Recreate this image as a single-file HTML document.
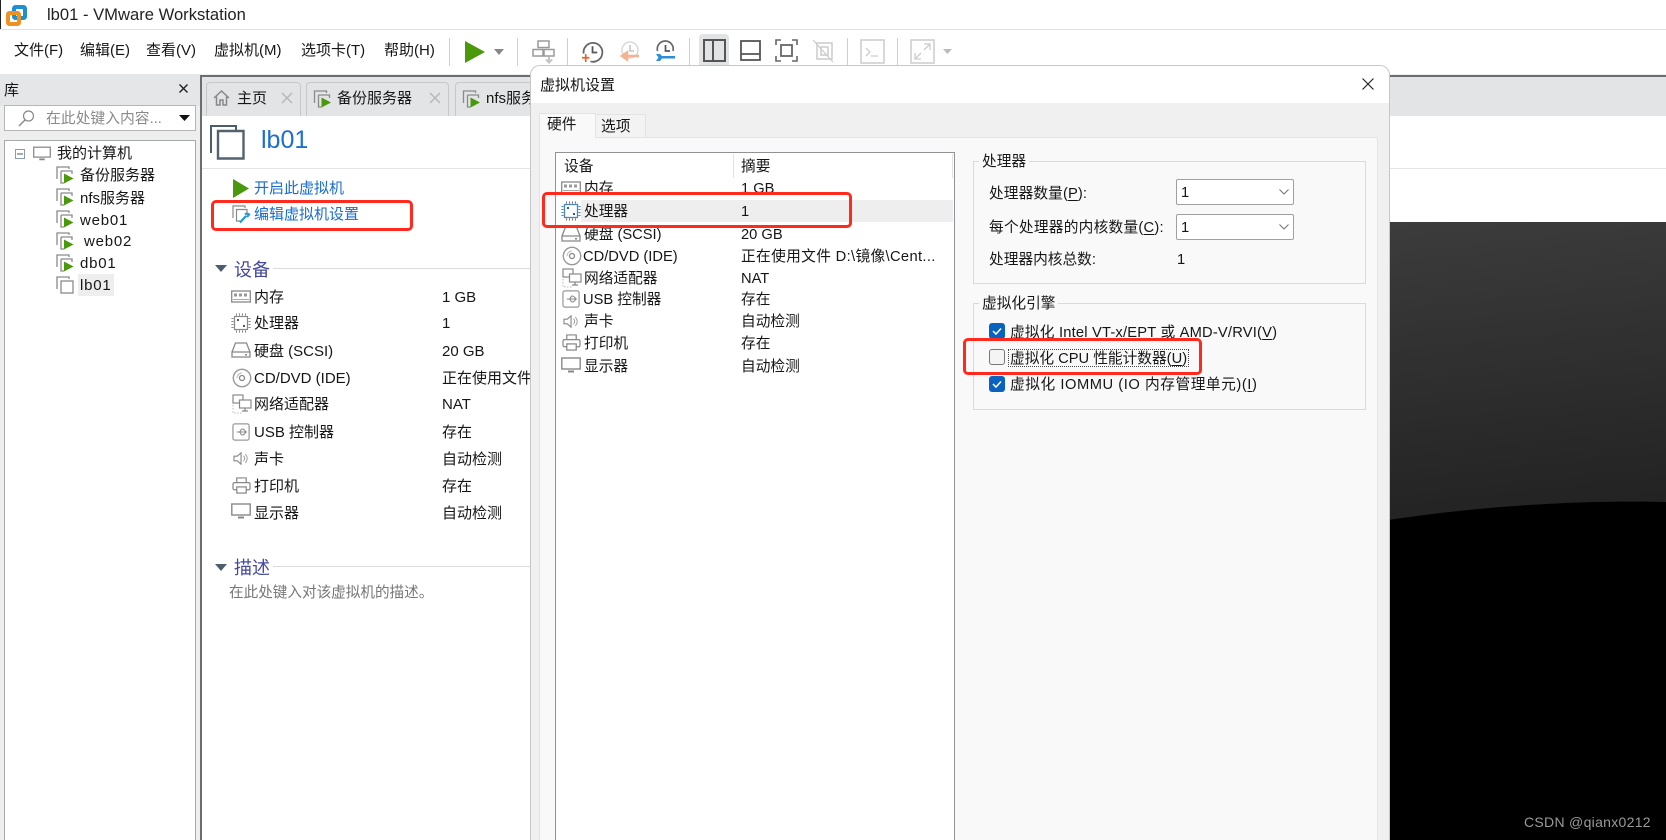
<!DOCTYPE html>
<html><head><meta charset="utf-8"><title>lb01 - VMware Workstation</title>
<style>
html,body{margin:0;padding:0;width:1666px;height:840px;overflow:hidden;background:#eeeeee}
body{position:relative;font-family:"Liberation Sans","Noto Sans CJK SC",sans-serif;font-size:15px;color:#161616}
.a{position:absolute}
.t{position:absolute;white-space:nowrap;line-height:20px;height:20px}
.i{position:absolute;overflow:visible}
.sep{position:absolute;width:1px;background:#cfcfcf;top:38px;height:28px}
.red{position:absolute;border:3px solid #ff2a1e;border-radius:5px;box-sizing:border-box;z-index:20}
.x{position:absolute;color:#b5b5b5}
.d{font-size:14.7px}
.w{letter-spacing:.8px}
u{text-underline-offset:2px}
.cb{position:absolute;left:989px;width:16px;height:16px;border-radius:3px;background:#0a62bf}
</style></head><body>
<svg width="0" height="0" style="position:absolute">
<defs>
<symbol id="vm" viewBox="0 0 18 18"><path d="M1 13V1H13V3" fill="none" stroke="#8a8a8a" stroke-width="1.3"/><path d="M5 5H16V8M5 5V17H8" fill="none" stroke="#8a8a8a" stroke-width="1.3"/><path d="M8 7.500L17.500 12.500 8 17.500Z" fill="#4a980b"/></symbol>
<symbol id="vmoff" viewBox="0 0 18 18"><path d="M1 13V1H13V3" fill="none" stroke="#8a8a8a" stroke-width="1.3"/><rect x="5" y="5" width="12" height="12" fill="#fff" stroke="#8a8a8a" stroke-width="1.3"/></symbol>
<symbol id="ram" viewBox="0 0 20 14"><rect x=".7" y="1" width="18.600" height="11" fill="#fff" stroke="#888" stroke-width="1.300"/><path d="M3 3.500h3v3H3zM8 3.500h3v3H8zM13 3.500h3v3h-3z" fill="#999"/><path d="M2 9.500h16" stroke="#aaa"/></symbol>
<symbol id="cpu" viewBox="0 0 20 20"><rect x="3.500" y="3.500" width="13" height="13" fill="#fff" stroke="#888" stroke-width="1.200"/><path d="M5 1.500h1M8 1.500h1M11 1.500h1M14 1.500h1M5 18.500h1M8 18.500h1M11 18.500h1M14 18.500h1" stroke="#888" stroke-width="2.200"/><path d="M1.500 5v1M1.500 8v1M1.500 11v1M1.500 14v1M18.500 5v1M18.500 8v1M18.500 11v1M18.500 14v1" stroke="#888" stroke-width="2.200"/><rect x="6" y="6" width="2" height="2" fill="#555"/><rect x="12" y="12" width="2" height="2" fill="#555"/></symbol>
<symbol id="cpub" viewBox="0 0 20 20"><rect x="3.500" y="3.500" width="13" height="13" fill="#fff" stroke="#4f86b5" stroke-width="1.300"/><path d="M5 1.500h1M8 1.500h1M11 1.500h1M14 1.500h1M5 18.500h1M8 18.500h1M11 18.500h1M14 18.500h1" stroke="#777" stroke-width="2.200"/><path d="M1.500 5v1M1.500 8v1M1.500 11v1M1.500 14v1M18.500 5v1M18.500 8v1M18.500 11v1M18.500 14v1" stroke="#4f86b5" stroke-width="2.200"/><rect x="6" y="6" width="2" height="2" fill="#2c5a85"/><rect x="12" y="12" width="2" height="2" fill="#2c5a85"/></symbol>
<symbol id="disk" viewBox="0 0 20 16"><path d="M4.500 1H15.500L19 10V15H1V10Z" fill="#fff" stroke="#888" stroke-width="1.300"/><path d="M1 10H19" stroke="#888" stroke-width="1.300"/><rect x="14" y="12" width="2" height="1.500" fill="#888"/></symbol>
<symbol id="cd" viewBox="0 0 20 20"><circle cx="10" cy="10" r="8.700" fill="#fff" stroke="#999" stroke-width="1.400"/><circle cx="10" cy="10" r="2.500" fill="none" stroke="#888" stroke-width="1.300"/><path d="M5 10a5 5 0 0 1 5-5" fill="none" stroke="#bbb"/></symbol>
<symbol id="net" viewBox="0 0 20 20"><rect x="1" y="1" width="10" height="8" fill="#fff" stroke="#888" stroke-width="1.200"/><rect x="7.500" y="6" width="11.500" height="8" fill="#fff" stroke="#888" stroke-width="1.200"/><path d="M13 14v2.500M10 17h6" stroke="#888" stroke-width="1.300"/><path d="M1 11v8h10" fill="none" stroke="#bbb" stroke-dasharray="1.500 1.500"/></symbol>
<symbol id="usb" viewBox="0 0 20 20"><rect x="1" y="1.500" width="17" height="17" rx="2" fill="#fff" stroke="#999" stroke-width="1.300"/><path d="M5 10H15M12 7l3 3-3 3M8 10l2-3h2M8 10l2 3h2" fill="none" stroke="#888" stroke-width="1.100"/></symbol>
<symbol id="snd" viewBox="0 0 20 16"><path d="M2 5.500H5.500L9.500 2V14L5.500 10.500H2Z" fill="#fff" stroke="#888" stroke-width="1.200"/><path d="M12 5a4 4 0 0 1 0 6M14 3.500a6 6 0 0 1 0 9" fill="none" stroke="#999" stroke-width="1"/></symbol>
<symbol id="prt" viewBox="0 0 20 18"><path d="M5 6V1H15V6" fill="#fff" stroke="#888" stroke-width="1.300"/><rect x="1" y="6" width="18" height="7.500" rx="1.500" fill="#fff" stroke="#888" stroke-width="1.300"/><rect x="5" y="10.500" width="10" height="6.500" fill="#fff" stroke="#888" stroke-width="1.300"/></symbol>
<symbol id="mon" viewBox="0 0 20 16"><rect x=".8" y="1" width="18.400" height="11" fill="#fff" stroke="#888" stroke-width="1.400"/><path d="M7 14.500H13" stroke="#888" stroke-width="2"/></symbol>
<symbol id="xic" viewBox="0 0 12 12"><path d="M1 1L11 11M11 1L1 11" stroke="#b8b8b8" stroke-width="1.500" fill="none"/></symbol>
</defs></svg>

<!-- title bar -->
<div class="a" style="left:0;top:0;width:1666px;height:29px;background:#fff"></div>
<div class="a" style="left:0;top:0;width:1px;height:29px;background:#222"></div>
<div class="a" style="left:0;top:29px;width:1666px;height:1px;background:#e2e2e2"></div>
<svg class="i" style="left:6px;top:5px" width="21" height="21" viewBox="0 0 21 21"><rect x="8" y="2" width="11" height="11" rx="1.500" fill="none" stroke="#1f8fd0" stroke-width="4"/><rect x="2" y="8" width="11" height="11" rx="1.500" fill="none" stroke="#f09020" stroke-width="4"/></svg>
<div class="t" style="left:47px;top:5px;font-size:16.600px;color:#222">lb01 - VMware Workstation</div>

<!-- toolbar -->
<div class="a" style="left:0;top:30px;width:1666px;height:44px;background:#fff"></div>
<div class="t" style="left:14px;top:41px">文件(F)</div>
<div class="t" style="left:80px;top:41px">编辑(E)</div>
<div class="t" style="left:146px;top:41px">查看(V)</div>
<div class="t" style="left:214px;top:41px">虚拟机(M)</div>
<div class="t" style="left:301px;top:41px">选项卡(T)</div>
<div class="t" style="left:384px;top:41px">帮助(H)</div>
<div class="sep" style="left:449px"></div>
<svg class="i" style="left:465px;top:41px" width="20" height="22"><path d="M0 0L20 11 0 22Z" fill="#4a980b"/></svg>
<svg class="i" style="left:494px;top:49px" width="10" height="6"><path d="M0 0H10L5 6Z" fill="#888"/></svg>
<div class="sep" style="left:517px"></div>
<svg class="i" style="left:532px;top:40px" width="23" height="24" viewBox="0 0 23 24"><rect x="6" y="1" width="11" height="6.500" fill="none" stroke="#9a9a9a" stroke-width="1.500"/><rect x="1" y="9.500" width="10" height="6.500" fill="none" stroke="#9a9a9a" stroke-width="1.500"/><rect x="12" y="9.500" width="10" height="6.500" fill="none" stroke="#9a9a9a" stroke-width="1.500"/><path d="M17 17v5M14 19.500l3 3 3-3" fill="none" stroke="#c4c4c4" stroke-width="2"/></svg>
<div class="sep" style="left:567px"></div>
<svg class="i" style="left:581px;top:41px" width="22" height="22" viewBox="0 0 21 21"><path d="M2.500 12A9 9 0 1 1 9 19.500" fill="none" stroke="#666" stroke-width="1.700"/><path d="M11 5V11H15.500" fill="none" stroke="#555" stroke-width="1.700"/><path d="M1 16H8M4.500 12.500V20" stroke="#e8622a" stroke-width="1.600"/></svg>
<svg class="i" style="left:619px;top:41px" width="21" height="21" viewBox="0 0 21 21"><circle cx="11" cy="9" r="8" fill="none" stroke="#d8d8d8" stroke-width="1.500"/><path d="M11 4V10H15" fill="none" stroke="#c4c4c4" stroke-width="1.500"/><path d="M20 15H5M8 11.500L3 15 8 18.500Z" fill="#f6b190" stroke="#f6b190" stroke-width="2.500"/></svg>
<svg class="i" style="left:655px;top:41px" width="21" height="21" viewBox="0 0 21 21"><path d="M2.500 10A8 8 0 1 1 18 10" fill="none" stroke="#666" stroke-width="1.700"/><path d="M10.500 4V10H15" fill="none" stroke="#555" stroke-width="1.700"/><path d="M1 13H5L7 15H20V17.500H7L5 20H1L3.500 16.500Z" fill="#2d8fd5"/></svg>
<div class="sep" style="left:689px"></div>
<div class="a" style="left:699px;top:34px;width:30px;height:32px;background:#e2e3e4;border-radius:4px 4px 0 0"></div>
<svg class="i" style="left:703px;top:39px" width="23" height="23"><rect x="1" y="1" width="21" height="21" fill="none" stroke="#555" stroke-width="2"/><path d="M10 1V22" stroke="#555" stroke-width="2"/></svg>
<svg class="i" style="left:740px;top:40px" width="21" height="21"><rect x="1" y="1" width="19" height="19" fill="none" stroke="#555" stroke-width="1.800"/><path d="M1 14H20" stroke="#555" stroke-width="1.800"/></svg>
<svg class="i" style="left:775px;top:39px" width="23" height="23"><rect x="6" y="6" width="11" height="11" fill="none" stroke="#666" stroke-width="1.800"/><path d="M1 6V1H6M17 1H22V6M22 17V22H17M6 22H1V17" fill="none" stroke="#666" stroke-width="1.600"/></svg>
<svg class="i" style="left:812px;top:39px" width="22" height="24"><path d="M5 4H20V20H5ZM9 8H16V16H9Z" fill="none" stroke="#ccc" stroke-width="1.500"/><path d="M1 1L21 23" stroke="#ccc" stroke-width="1.300"/></svg>
<div class="sep" style="left:847px"></div>
<svg class="i" style="left:860px;top:39px" width="25" height="25"><rect x="1" y="1" width="23" height="23" fill="none" stroke="#ccc" stroke-width="1.500"/><path d="M6 9L10 13 6 17M11 17H18" fill="none" stroke="#ccc" stroke-width="1.300"/></svg>
<div class="sep" style="left:897px"></div>
<svg class="i" style="left:910px;top:39px" width="25" height="25"><rect x="1" y="1" width="23" height="23" fill="none" stroke="#ccc" stroke-width="1.500"/><path d="M14 5H20V11M5 14V20H11M20 5L14 11M5 20L11 14" fill="none" stroke="#ccc" stroke-width="1.300"/></svg>
<svg class="i" style="left:943px;top:49px" width="9" height="5"><path d="M0 0H9L4.500 5Z" fill="#bbb"/></svg>

<!-- sidebar -->
<div class="a" style="left:0;top:74px;width:200px;height:766px;background:#eeeeee"></div>
<div class="a" style="left:0;top:74px;width:200px;height:32px;background:#e5e6e7"></div>
<div class="t" style="left:4px;top:81px">库</div>
<svg class="i" style="left:179px;top:84px" width="9" height="9"><path d="M.5 .5L8.500 8.500M8.500 .5L.5 8.500" stroke="#222" stroke-width="1.400"/></svg>
<div class="a" style="left:4px;top:105px;width:192px;height:26px;background:#fff;border:1px solid #b4b6b8;box-sizing:border-box"></div>
<svg class="i" style="left:18px;top:110px" width="17" height="17"><circle cx="10.500" cy="6" r="5" fill="none" stroke="#888" stroke-width="1.200"/><path d="M7 10L1 16" stroke="#888" stroke-width="1.400"/></svg>
<div class="t" style="left:46px;top:109px;color:#8a8a8a;font-size:14.800px">在此处键入内容...</div>
<svg class="i" style="left:179px;top:115px" width="11" height="6"><path d="M0 0H11L5.500 6Z" fill="#111"/></svg>
<div class="a" style="left:4px;top:140px;width:192px;height:700px;background:#fff;border:1px solid #a8abad;border-bottom:none;box-sizing:border-box"></div>
<svg class="i" style="left:15px;top:149px" width="10" height="10"><rect x=".5" y=".5" width="9" height="9" fill="#fff" stroke="#8b9aac"/><path d="M2 5H8" stroke="#44546a"/></svg>
<svg class="i" style="left:33px;top:146px" width="18" height="15"><use href="#mon"/></svg>
<div class="t" style="left:57px;top:144px">我的计算机</div>
<svg class="i" style="left:56px;top:166px" width="18" height="18"><use href="#vm"/></svg><div class="t" style="left:80px;top:166px">备份服务器</div>
<svg class="i" style="left:56px;top:188px" width="18" height="18"><use href="#vm"/></svg><div class="t" style="left:80px;top:189px">nfs服务器</div>
<svg class="i" style="left:56px;top:210px" width="18" height="18"><use href="#vm"/></svg><div class="t w" style="left:80px;top:211px">web01</div>
<svg class="i" style="left:56px;top:232px" width="18" height="18"><use href="#vm"/></svg><div class="t w" style="left:84px;top:232px">web02</div>
<svg class="i" style="left:56px;top:254px" width="18" height="18"><use href="#vm"/></svg><div class="t w" style="left:80px;top:254px">db01</div>
<div class="a" style="left:78px;top:274px;width:36px;height:22px;background:#eeeeee"></div>
<svg class="i" style="left:56px;top:276px" width="18" height="18"><use href="#vmoff"/></svg><div class="t w" style="left:80px;top:276px">lb01</div>

<!-- main panel -->
<div class="a" style="left:200px;top:75px;width:1466px;height:765px;background:#fff"></div>
<div class="a" style="left:200px;top:75px;width:1466px;height:2px;background:#6b6d70"></div>
<div class="a" style="left:200px;top:75px;width:2px;height:765px;background:#6b6d70"></div>
<div class="a" style="left:202px;top:77px;width:1464px;height:39px;background:#e3e4e5"></div>
<div class="a" style="left:206px;top:82px;width:95px;height:34px;box-sizing:border-box;border:1px solid #c6c8ca;border-bottom:none;border-radius:4px 4px 0 0"></div>
<svg class="i" style="left:213px;top:90px" width="17" height="16"><path d="M1 8L8.500 1 16 8M3.500 6.500V15H7V10H10V15H13.500V6.500" fill="none" stroke="#888" stroke-width="1.500"/></svg>
<div class="t" style="left:237px;top:89px">主页</div>
<svg class="i" style="left:281px;top:92px" width="12" height="12"><use href="#xic"/></svg>
<div class="a" style="left:306px;top:82px;width:143px;height:34px;box-sizing:border-box;border:1px solid #c6c8ca;border-bottom:none;border-radius:4px 4px 0 0"></div>
<svg class="i" style="left:313px;top:90px" width="19" height="18"><use href="#vm"/></svg>
<div class="t" style="left:337px;top:89px">备份服务器</div>
<svg class="i" style="left:429px;top:92px" width="12" height="12"><use href="#xic"/></svg>
<div class="a" style="left:455px;top:82px;width:90px;height:34px;box-sizing:border-box;border:1px solid #c6c8ca;border-bottom:none;border-radius:4px 4px 0 0"></div>
<svg class="i" style="left:462px;top:90px" width="19" height="18"><use href="#vm"/></svg>
<div class="t" style="left:486px;top:89px;width:45px;overflow:hidden">nfs服务器</div>

<svg class="i" style="left:209px;top:124px" width="36" height="36" viewBox="0 0 36 36"><path d="M2 29V2H27V6" fill="none" stroke="#4e5d6c" stroke-width="2"/><path d="M9 7H34.500V34.500H9Z" fill="#fff" stroke="#53626f" stroke-width="2.400"/></svg>
<div class="t" style="left:261px;top:125px;font-size:25px;line-height:30px;height:30px;color:#1b6fd1">lb01</div>
<div class="a" style="left:202px;top:168px;width:1464px;height:1px;background:#e4e4e4"></div>
<svg class="i" style="left:233px;top:179px" width="16" height="19"><path d="M0 0L16 9.500 0 19Z" fill="#4a980b"/></svg>
<div class="t" style="left:254px;top:179px;color:#1a6dcc">开启此虚拟机</div>
<svg class="i" style="left:232px;top:205px" width="18" height="18" viewBox="0 0 18 18"><path d="M1 13V1H13V3" fill="none" stroke="#8a8a8a" stroke-width="1.200"/><path d="M8 16H4.500V4.500H15V9" fill="#fff" stroke="#8a8a8a" stroke-width="1.200"/><path d="M8 17.500L14 11M13 9.500a3 3 0 0 1 4 0L15 12" fill="none" stroke="#1f9ad6" stroke-width="2.200"/></svg>
<div class="t" style="left:254px;top:205px;color:#1a6dcc">编辑虚拟机设置</div>
<svg class="i" style="left:215px;top:265px" width="12" height="7"><path d="M0 0H12L6 7Z" fill="#4e5d6c"/></svg>
<div class="t" style="left:234px;top:260px;font-size:18px;color:#44489e">设备</div>
<div class="a" style="left:273px;top:268px;width:260px;height:1px;background:#dcdcdc"></div>
<svg class="i" style="left:231px;top:290px" width="20" height="14"><use href="#ram"/></svg><div class="t" style="left:254px;top:288px">内存</div><div class="t" style="left:442px;top:288px">1 GB</div>
<svg class="i" style="left:231px;top:313px" width="20" height="20"><use href="#cpu"/></svg><div class="t" style="left:254px;top:314px">处理器</div><div class="t" style="left:442px;top:314px">1</div>
<svg class="i" style="left:231px;top:342px" width="20" height="16"><use href="#disk"/></svg><div class="t" style="left:254px;top:342px">硬盘 (SCSI)</div><div class="t" style="left:442px;top:342px">20 GB</div>
<svg class="i" style="left:232px;top:368px" width="20" height="20"><use href="#cd"/></svg><div class="t" style="left:254px;top:369px">CD/DVD (IDE)</div><div class="t" style="left:442px;top:369px;width:88px;overflow:hidden">正在使用文件</div>
<svg class="i" style="left:232px;top:394px" width="20" height="20"><use href="#net"/></svg><div class="t" style="left:254px;top:395px">网络适配器</div><div class="t" style="left:442px;top:395px">NAT</div>
<svg class="i" style="left:232px;top:422px" width="19" height="20"><use href="#usb"/></svg><div class="t" style="left:254px;top:423px">USB 控制器</div><div class="t" style="left:442px;top:423px">存在</div>
<svg class="i" style="left:232px;top:451px" width="19" height="15"><use href="#snd"/></svg><div class="t" style="left:254px;top:450px">声卡</div><div class="t" style="left:442px;top:450px">自动检测</div>
<svg class="i" style="left:232px;top:477px" width="19" height="17"><use href="#prt"/></svg><div class="t" style="left:254px;top:477px">打印机</div><div class="t" style="left:442px;top:477px">存在</div>
<svg class="i" style="left:231px;top:503px" width="20" height="16"><use href="#mon"/></svg><div class="t" style="left:254px;top:504px">显示器</div><div class="t" style="left:442px;top:504px">自动检测</div>
<svg class="i" style="left:215px;top:564px" width="12" height="7"><path d="M0 0H12L6 7Z" fill="#4e5d6c"/></svg>
<div class="t" style="left:234px;top:558px;font-size:18px;color:#44489e">描述</div>
<div class="a" style="left:273px;top:566px;width:260px;height:1px;background:#dcdcdc"></div>
<div class="t" style="left:229px;top:583px;color:#777;font-size:14.600px">在此处键入对该虚拟机的描述。</div>

<!-- dark console -->
<svg class="a" style="left:1389px;top:222px" width="277" height="618" viewBox="0 0 277 618"><defs><linearGradient id="g" x1="0" y1="0" x2="0.100" y2="1"><stop offset="0" stop-color="#3c3c3c"/><stop offset="1" stop-color="#232323"/></linearGradient></defs><rect width="277" height="300" fill="url(#g)"/><path d="M0 298C90 284 190 278 277 280V618H0Z" fill="#000"/></svg>
<div class="t" style="left:1524px;top:812px;font-size:14px;color:#9a9a9a;letter-spacing:.3px">CSDN @qianx0212</div>

<!-- dialog -->
<div class="a" style="left:530px;top:65px;width:860px;height:776px;background:#f0f0f0;border:1px solid #c6c6c6;border-bottom:none;border-radius:10px 10px 0 0;box-sizing:border-box;z-index:5"></div>
<div class="a" style="left:531px;top:66px;width:858px;height:37px;background:#fff;border-radius:9px 9px 0 0;z-index:5"></div>
<div style="position:absolute;left:0;top:0;z-index:6;width:1666px;height:840px">
<div class="t" style="left:540px;top:76px">虚拟机设置</div>
<svg class="i" style="left:1362px;top:78px" width="12" height="12"><path d="M.5 .5L11.500 11.500M11.500 .5L.5 11.500" stroke="#222" stroke-width="1.200"/></svg>
<div class="a" style="left:539px;top:137px;width:839px;height:703px;background:#f9f9f9;border:1px solid #e3e3e3;border-bottom:none;box-sizing:border-box"></div>
<div class="a" style="left:596px;top:114px;width:50px;height:24px;background:#f3f3f3;border:1px solid #e3e3e3;border-left:none;box-sizing:border-box"></div>
<div class="a" style="left:539px;top:113px;width:57px;height:25px;background:#f9f9f9;border:1px solid #e3e3e3;border-bottom:none;box-sizing:border-box"></div>
<div class="t d" style="left:547px;top:115px">硬件</div>
<div class="t d" style="left:601px;top:117px">选项</div>

<div class="a" style="left:555px;top:152px;width:400px;height:688px;background:#fff;border:1px solid #8f9296;border-bottom:none;box-sizing:border-box"></div>
<div class="a" style="left:733px;top:154px;width:1px;height:24px;background:#e2e2e2"></div>
<div class="a" style="left:952px;top:154px;width:1px;height:24px;background:#e2e2e2"></div>
<div class="t d" style="left:564px;top:157px">设备</div><div class="t d" style="left:741px;top:157px">摘要</div>
<div class="a" style="left:581px;top:200px;width:372px;height:22px;background:#eeeeee"></div>
<svg class="i" style="left:561px;top:181px" width="20" height="14"><use href="#ram"/></svg><div class="t d" style="left:584px;top:179px">内存</div><div class="t d" style="left:741px;top:179px">1 GB</div>
<svg class="i" style="left:561px;top:201px" width="20" height="20"><use href="#cpub"/></svg><div class="t d" style="left:584px;top:202px">处理器</div><div class="t d" style="left:741px;top:202px">1</div>
<svg class="i" style="left:561px;top:226px" width="20" height="16"><use href="#disk"/></svg><div class="t d" style="left:584px;top:225px">硬盘 (SCSI)</div><div class="t d" style="left:741px;top:225px">20 GB</div>
<svg class="i" style="left:562px;top:246px" width="20" height="20"><use href="#cd"/></svg><div class="t d" style="left:583px;top:247px">CD/DVD (IDE)</div><div class="t d" style="left:741px;top:247px;letter-spacing:.35px">正在使用文件 D:\镜像\Cent...</div>
<svg class="i" style="left:562px;top:268px" width="20" height="20"><use href="#net"/></svg><div class="t d" style="left:584px;top:269px">网络适配器</div><div class="t d" style="left:741px;top:269px">NAT</div>
<svg class="i" style="left:562px;top:289px" width="19" height="20"><use href="#usb"/></svg><div class="t d" style="left:583px;top:290px">USB 控制器</div><div class="t d" style="left:741px;top:290px">存在</div>
<svg class="i" style="left:562px;top:314px" width="19" height="15"><use href="#snd"/></svg><div class="t d" style="left:584px;top:312px">声卡</div><div class="t d" style="left:741px;top:312px">自动检测</div>
<svg class="i" style="left:562px;top:334px" width="19" height="17"><use href="#prt"/></svg><div class="t d" style="left:584px;top:334px">打印机</div><div class="t d" style="left:741px;top:334px">存在</div>
<svg class="i" style="left:561px;top:357px" width="20" height="16"><use href="#mon"/></svg><div class="t d" style="left:584px;top:357px">显示器</div><div class="t d" style="left:741px;top:357px">自动检测</div>

<div class="a" style="left:973px;top:161px;width:393px;height:123px;border:1px solid #d9d9d9;box-sizing:border-box"></div>
<div class="t d" style="left:979px;top:153px;background:#f9f9f9;padding:0 3px;height:18px;line-height:18px">处理器</div>
<div class="t d" style="left:989px;top:184px;letter-spacing:.1px">处理器数量(<u>P</u>):</div>
<div class="a" style="left:1176px;top:179px;width:118px;height:26px;background:#fff;border:1px solid #a0a0a0;border-radius:2px;box-sizing:border-box"></div>
<div class="t d" style="left:1181px;top:183px">1</div>
<svg class="i" style="left:1279px;top:189px" width="10" height="6"><path d="M.5 .5L5 5 9.500 .5" fill="none" stroke="#777" stroke-width="1.100"/></svg>
<div class="t d" style="left:989px;top:218px;letter-spacing:.25px">每个处理器的内核数量(<u>C</u>):</div>
<div class="a" style="left:1176px;top:214px;width:118px;height:26px;background:#fff;border:1px solid #a0a0a0;border-radius:2px;box-sizing:border-box"></div>
<div class="t d" style="left:1181px;top:218px">1</div>
<svg class="i" style="left:1279px;top:224px" width="10" height="6"><path d="M.5 .5L5 5 9.500 .5" fill="none" stroke="#777" stroke-width="1.100"/></svg>
<div class="t d" style="left:989px;top:250px">处理器内核总数:</div>
<div class="t d" style="left:1177px;top:250px">1</div>

<div class="a" style="left:973px;top:303px;width:393px;height:107px;border:1px solid #d9d9d9;box-sizing:border-box"></div>
<div class="t d" style="left:979px;top:295px;background:#f9f9f9;padding:0 3px;height:18px;line-height:18px">虚拟化引擎</div>
<div class="cb" style="top:323px"></div>
<svg class="i" style="left:992px;top:327px" width="10" height="8"><path d="M1 4L4 7 9 1.500" fill="none" stroke="#fff" stroke-width="1.500"/></svg>
<div class="t d" style="left:1010px;top:323px;letter-spacing:.2px">虚拟化 Intel VT-x/EPT 或 AMD-V/RVI(<u>V</u>)</div>
<div class="a" style="left:989px;top:349px;width:16px;height:16px;border-radius:3px;background:#f4f4f4;border:1px solid #777;box-sizing:border-box"></div>
<div class="a" style="left:1008px;top:349px;width:181px;height:18px;border:1px dotted #444;box-sizing:border-box"></div>
<div class="t d" style="left:1010px;top:349px">虚拟化 CPU 性能计数器(<u>U</u>)</div>
<div class="cb" style="top:376px"></div>
<svg class="i" style="left:992px;top:380px" width="10" height="8"><path d="M1 4L4 7 9 1.500" fill="none" stroke="#fff" stroke-width="1.500"/></svg>
<div class="t d" style="left:1010px;top:375px;letter-spacing:.55px">虚拟化 IOMMU (IO 内存管理单元)(<u>I</u>)</div>
</div>

<!-- red annotations -->
<div class="red" style="left:211px;top:200px;width:202px;height:31px"></div>
<div class="red" style="left:542px;top:192px;width:310px;height:36px"></div>
<div class="red" style="left:963px;top:338px;width:239px;height:37px"></div>
</body></html>
